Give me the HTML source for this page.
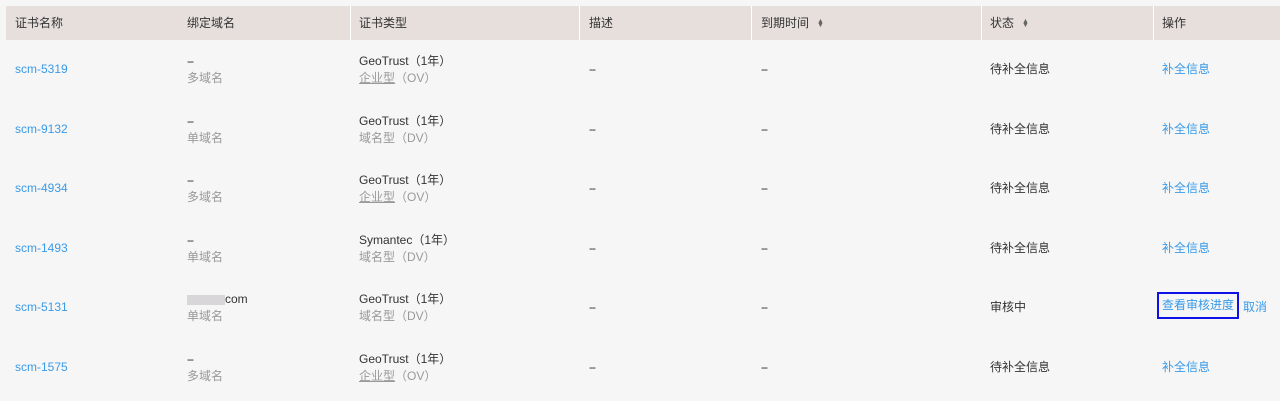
<!DOCTYPE html>
<html><head><meta charset="utf-8"><style>
body{margin:0;background:#f6f6f6;font-family:"Liberation Sans","Noto Sans CJK SC",sans-serif;font-size:12px;color:#333;width:1280px;height:401px;overflow:hidden;position:relative}
.hdr{position:absolute;left:6px;top:6px;width:1274px;height:34px;background:#e6dfdc}
.c{position:absolute;white-space:nowrap;line-height:17px}
.sep{position:absolute;top:6px;height:34px;width:1px;background:#fff}
.b{color:#3a9ae8}
.g{color:#999}
.u{text-decoration:underline;text-decoration-color:#999}
.d{letter-spacing:-1px}
.sort{display:inline-block;margin-left:8px;font-size:7px;line-height:4px;vertical-align:middle;color:#666}
</style></head><body>
<div class="hdr"></div>
<div class="sep" style="left:350px"></div><div class="sep" style="left:579px"></div><div class="sep" style="left:751px"></div><div class="sep" style="left:981px"></div><div class="sep" style="left:1153px"></div>
<div class="c" style="left:15px;top:15px">证书名称</div>
<div class="c" style="left:187px;top:15px">绑定域名</div>
<div class="c" style="left:359px;top:15px">证书类型</div>
<div class="c" style="left:589px;top:15px">描述</div>
<div class="c" style="left:761px;top:15px">到期时间<span class="sort">▲<br>▼</span></div>
<div class="c" style="left:990px;top:15px">状态<span class="sort">▲<br>▼</span></div>
<div class="c" style="left:1162px;top:15px">操作</div>

<div class="c b" style="left:15px;top:61px">scm-5319</div>
<div class="c" style="left:187px;top:53px"><span class="d">--</span><br><span class="g">多域名</span></div>
<div class="c" style="left:359px;top:53px">GeoTrust（1年）<br><span class="g"><span class="u">企业型</span>（OV）</span></div>
<div class="c d" style="left:589px;top:61px">--</div><div class="c d" style="left:761px;top:61px">--</div>
<div class="c" style="left:990px;top:61px">待补全信息</div><div class="c b" style="left:1162px;top:61px">补全信息</div>

<div class="c b" style="left:15px;top:121px">scm-9132</div>
<div class="c" style="left:187px;top:113px"><span class="d">--</span><br><span class="g">单域名</span></div>
<div class="c" style="left:359px;top:113px">GeoTrust（1年）<br><span class="g">域名型（DV）</span></div>
<div class="c d" style="left:589px;top:121px">--</div><div class="c d" style="left:761px;top:121px">--</div>
<div class="c" style="left:990px;top:121px">待补全信息</div><div class="c b" style="left:1162px;top:121px">补全信息</div>

<div class="c b" style="left:15px;top:180px">scm-4934</div>
<div class="c" style="left:187px;top:172px"><span class="d">--</span><br><span class="g">多域名</span></div>
<div class="c" style="left:359px;top:172px">GeoTrust（1年）<br><span class="g"><span class="u">企业型</span>（OV）</span></div>
<div class="c d" style="left:589px;top:180px">--</div><div class="c d" style="left:761px;top:180px">--</div>
<div class="c" style="left:990px;top:180px">待补全信息</div><div class="c b" style="left:1162px;top:180px">补全信息</div>

<div class="c b" style="left:15px;top:240px">scm-1493</div>
<div class="c" style="left:187px;top:232px"><span class="d">--</span><br><span class="g">单域名</span></div>
<div class="c" style="left:359px;top:232px">Symantec（1年）<br><span class="g">域名型（DV）</span></div>
<div class="c d" style="left:589px;top:240px">--</div><div class="c d" style="left:761px;top:240px">--</div>
<div class="c" style="left:990px;top:240px">待补全信息</div><div class="c b" style="left:1162px;top:240px">补全信息</div>

<div class="c b" style="left:15px;top:299px">scm-5131</div>
<div class="c" style="left:187px;top:291px"><span style="display:inline-block;width:38px;height:10px;background:#d8d6d8;vertical-align:middle"></span>com<br><span class="g">单域名</span></div>
<div class="c" style="left:359px;top:291px">GeoTrust（1年）<br><span class="g">域名型（DV）</span></div>
<div class="c d" style="left:589px;top:299px">--</div><div class="c d" style="left:761px;top:299px">--</div>
<div class="c" style="left:990px;top:299px">审核中</div>
<div class="c b" style="left:1157px;top:292px;border:2px solid #1010e8;padding:4px 3px;line-height:15px">查看审核进度</div>
<div class="c b" style="left:1243px;top:299px">取消</div>

<div class="c b" style="left:15px;top:359px">scm-1575</div>
<div class="c" style="left:187px;top:351px"><span class="d">--</span><br><span class="g">多域名</span></div>
<div class="c" style="left:359px;top:351px">GeoTrust（1年）<br><span class="g"><span class="u">企业型</span>（OV）</span></div>
<div class="c d" style="left:589px;top:359px">--</div><div class="c d" style="left:761px;top:359px">--</div>
<div class="c" style="left:990px;top:359px">待补全信息</div><div class="c b" style="left:1162px;top:359px">补全信息</div>
</body></html>
